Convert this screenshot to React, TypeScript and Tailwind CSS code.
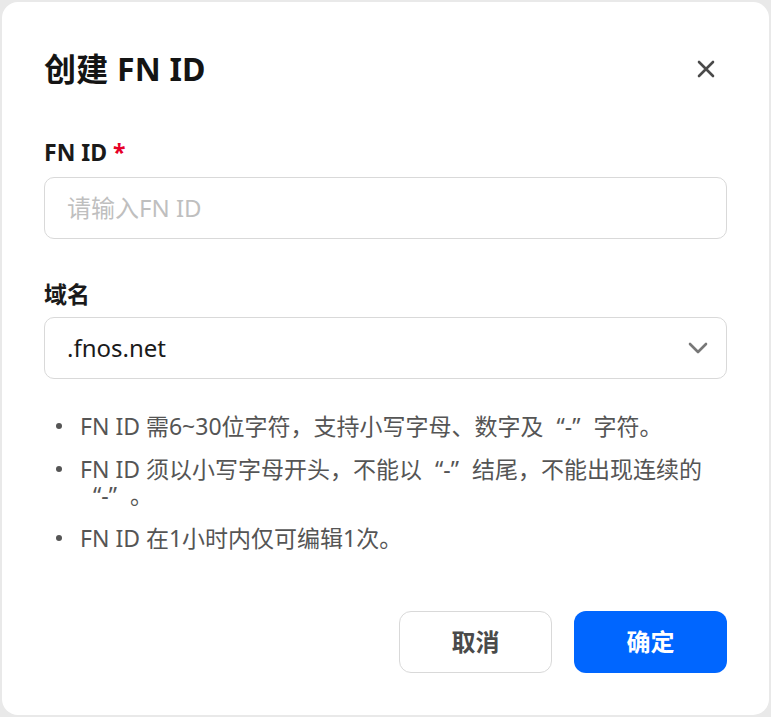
import React from "react";

const font = { fontFamily: '"Noto Sans", "Noto Sans CJK SC", sans-serif' };

function Bullet({ children }: { children: React.ReactNode }) {
  return (
    <li className="flex items-start">
      <span className="w-[36px] shrink-0 pl-[12px] pt-[10px]">
        <span className="block w-[6px] h-[6px] rounded-full bg-[#555555]" />
      </span>
      <span className="flex-1">{children}</span>
    </li>
  );
}

function Q() {
  return (
    <>
      <span className="ml-[13px]">“</span>-<span className="mr-[13px]">”</span>
    </>
  );
}

export default function App() {
  return (
    <div className="w-[771px] h-[717px] bg-[#e9e9e9] p-[2px]" style={font}>
      <div className="w-[767px] h-[713px] bg-white rounded-[16px] px-[42px] pt-[47px] pb-[42px] flex flex-col">
        <div className="flex items-center justify-between h-[40px]">
          <h1 className="text-[32px] font-bold text-[#141414] leading-[40px] tracking-[0.2px]">创建 FN ID</h1>
          <button className="w-[28px] h-[28px] flex items-center justify-center mr-[7px]">
            <svg width="20" height="20" viewBox="0 0 20 20" fill="none">
              <path d="M3 3L17 17M17 3L3 17" stroke="#4a4a4a" strokeWidth="2.6" strokeLinecap="round" />
            </svg>
          </button>
        </div>

        <label className="mt-[48px] text-[23px] font-bold text-[#1a1a1a] leading-[30px]">
          FN ID <span className="text-[#e60028]">*</span>
        </label>
        <div className="mt-[10px] h-[62px] rounded-[10px] border border-[#d9d9d9] flex items-center px-[22px]">
          <input
            className="w-full outline-none text-[24px] text-[#1a1a1a] placeholder:text-[#bfbfbf] bg-transparent"
            placeholder="请输入FN ID"
            style={font}
          />
        </div>

        <label className="mt-[40px] text-[23px] font-bold text-[#1a1a1a] leading-[30px]">域名</label>
        <div className="mt-[8px] h-[62px] rounded-[10px] border border-[#d9d9d9] flex items-center justify-between pl-[22px] pr-[18px]">
          <span className="text-[24px] text-[#1a1a1a]">.fnos.net</span>
          <svg width="20" height="12" viewBox="0 0 20 12" fill="none">
            <path d="M2 2L10 10L18 2" stroke="#777777" strokeWidth="2.6" strokeLinecap="round" strokeLinejoin="round" />
          </svg>
        </div>

        <ul className="mt-[34px] flex flex-col gap-[17px] text-[23px] leading-[26px] text-[#555555]">
          <Bullet>
            FN ID 需6~30位字符，支持小写字母、数字及<Q />字符。
          </Bullet>
          <Bullet>
            FN ID 须以小写字母开头，不能以<Q />结尾，不能出现连续的
            <br />
            <Q />。
          </Bullet>
          <Bullet>FN ID 在1小时内仅可编辑1次。</Bullet>
        </ul>

        <div className="mt-auto flex justify-end gap-[22px]">
          <button className="w-[153px] h-[62px] rounded-[12px] border border-[#d9d9d9] bg-white text-[24px] font-bold text-[#4a4a4a]">
            取消
          </button>
          <button className="w-[153px] h-[62px] rounded-[12px] bg-[#0066ff] text-[24px] font-bold text-white">
            确定
          </button>
        </div>
      </div>
    </div>
  );
}
